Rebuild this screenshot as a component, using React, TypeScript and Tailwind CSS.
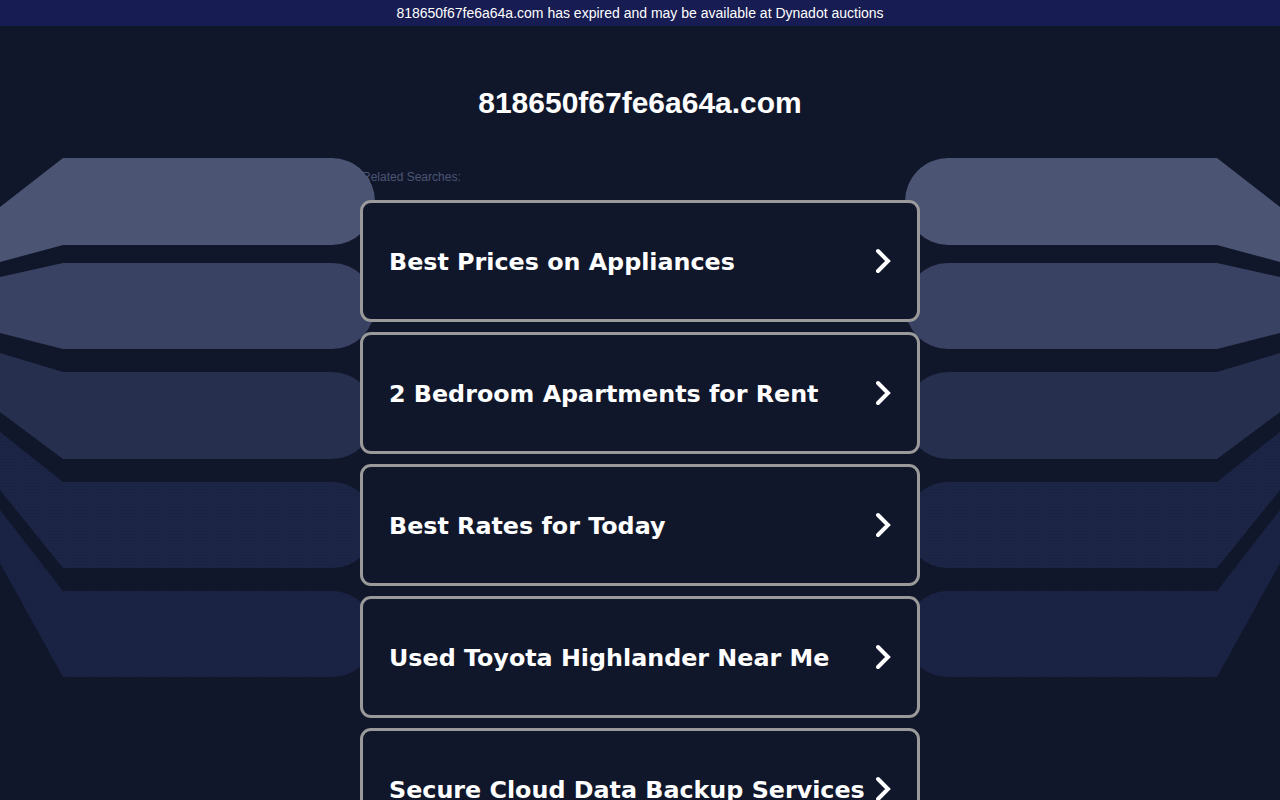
import React from "react";

const items = [
  "Best Prices on Appliances",
  "2 Bedroom Apartments for Rent",
  "Best Rates for Today",
  "Used Toyota Highlander Near Me",
  "Secure Cloud Data Backup Services",
];

const bands = [
  { t: 158, b: 245, lt: 207, lb: 262, c: "#4b5573" },
  { t: 263, b: 349, lt: 277, lb: 333, c: "#3a4263" },
  { t: 372, b: 459, lt: 353, lb: 412, c: "#272f4f" },
  { t: 482, b: 568, lt: 432, lb: 490, c: "#1d2546", dots: true },
  { t: 591, b: 677, lt: 510, lb: 563, c: "#1b2344", dots: true },
];

function leftPath(t: number, b: number, lt: number, lb: number) {
  const r = (b - t) / 2;
  return `M0,${lt} L63,${t} H${375 - r} A${r},${r} 0 0 1 ${375 - r},${b} H63 L0,${lb} Z`;
}

function Decor() {
  return (
    <svg
      className="absolute left-0 top-0 z-10 pointer-events-none"
      width="1280"
      height="800"
      viewBox="0 0 1280 800"
    >
      <defs>
        <pattern id="dots" width="3" height="3" patternUnits="userSpaceOnUse">
          <rect x="0" y="0" width="1" height="1" fill="#18203f" />
        </pattern>
      </defs>
      {bands.map((bd, i) => {
        const d = leftPath(bd.t, bd.b, bd.lt, bd.lb);
        return (
          <g key={i}>
            <path d={d} fill={bd.c} />
            {bd.dots && <path d={d} fill="url(#dots)" />}
            <g transform="translate(1280,0) scale(-1,1)">
              <path d={d} fill={bd.c} />
              {bd.dots && <path d={d} fill="url(#dots)" />}
            </g>
          </g>
        );
      })}
    </svg>
  );
}

function Chevron() {
  return (
    <svg width="16" height="26" viewBox="0 0 16 26" className="shrink-0">
      <polyline
        points="3,3 13,13 3,23"
        fill="none"
        stroke="#ffffff"
        strokeWidth="4"
        strokeLinecap="round"
        strokeLinejoin="miter"
      />
    </svg>
  );
}

export default function App() {
  return (
    <div className="relative min-h-[800px] w-full overflow-hidden bg-[#11172b]">
      <div
        className="relative z-20 flex h-[26px] items-center justify-center bg-[#171c52] text-[14px] text-white"
        style={{ fontFamily: '"Liberation Sans", Arial, sans-serif' }}
      >
        818650f67fe6a64a.com has expired and may be available at Dynadot auctions
      </div>
      <Decor />
      <div className="relative mx-auto w-[560px]">
        <h1
          className="mt-[59px] text-center text-[30px] font-bold leading-[36px] text-white"
          style={{ fontFamily: '"Liberation Sans", Arial, sans-serif' }}
        >
          818650f67fe6a64a.com
        </h1>
        <div
          className="relative z-0 mt-[48px] pl-[2px] text-[12px] leading-[16px] text-[#4b5573]"
          style={{ fontFamily: '"Liberation Sans", Arial, sans-serif' }}
        >
          Related Searches:
        </div>
        <div className="relative z-20 mt-[15px] flex flex-col gap-[10px]">
          {items.map((t) => (
            <div
              key={t}
              className="flex h-[122px] items-center justify-between rounded-[11px] border-[3px] border-[#9a9a9a] bg-[#11172b] pl-[26px] pr-[26px]"
            >
              <span
                className="pt-[4px] text-[23.8px] font-bold text-white"
                style={{ fontFamily: '"DejaVu Sans", Verdana, sans-serif' }}
              >
                {t}
              </span>
              <Chevron />
            </div>
          ))}
        </div>
      </div>
    </div>
  );
}
